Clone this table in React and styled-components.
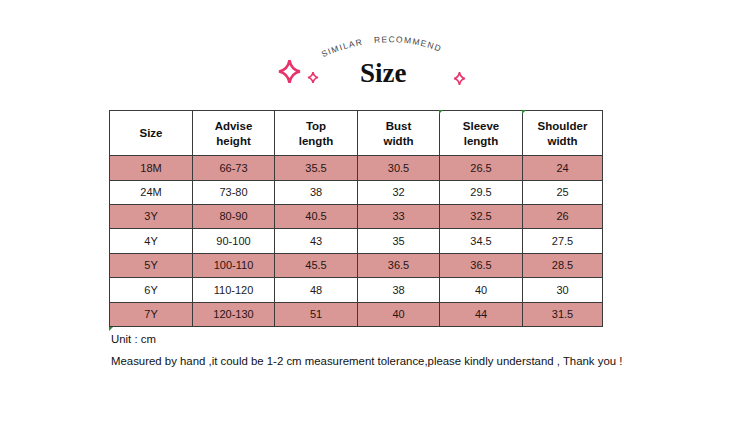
import React from "react";
import styled, { createGlobalStyle } from "styled-components";

const GlobalStyle = createGlobalStyle`
  html, body { margin: 0; padding: 0; background: #ffffff; }
  body { font-family: "Liberation Sans", Arial, sans-serif; }
`;

const Page = styled.div`
  width: 750px;
  height: 429px;
  background: #fff;
  display: flex;
  flex-direction: column;
  overflow: hidden;
`;

const Header = styled.div`
  display: flex;
  flex-direction: column;
  align-items: flex-start;
  padding: 34px 0 0 277px;
  height: 110px;
  flex: none;
  box-sizing: border-box;
`;

const ArcSvg = styled.svg`
  display: block;
  flex: none;
  margin-left: 41px;
  width: 132px;
  height: 26px;
`;

const TitleRow = styled.div`
  display: flex;
  flex: none;
  align-items: center;
  height: 28px;
  margin-top: -3px;
`;

const Sparkle = styled.svg`
  display: block;
  flex: none;
  margin-left: ${(p) => p.$ml || 0}px;
  margin-top: ${(p) => p.$mt || 0}px;
`;

const Title = styled.h1`
  margin: 0 0 0 ${(p) => p.$ml}px;
  font-family: "Liberation Serif", "Times New Roman", serif;
  font-weight: 700;
  font-size: 27px;
  line-height: 28px;
  color: #111;
  position: relative;
  top: 2px;
`;

const Table = styled.div`
  margin: 0 0 0 109px;
  display: grid;
  grid-template-columns: 82px 81px 82px 81px 82px 79px;
  grid-template-rows: 44px 24px 23px 23px 24px 23px 24px 23px;
  gap: 1px;
  padding: 1px;
  background: #3a3a3a;
  width: max-content;
  flex: none;
`;

const Row = styled.div`
  display: contents;
`;

const Cell = styled.div`
  position: relative;
  display: flex;
  align-items: center;
  justify-content: center;
  text-align: center;
  background: ${(p) => (p.$pink ? "#d99896" : "#ffffff")};
  color: ${(p) => (p.$pink ? "#2a1414" : "#1a1a1a")};
  font-size: 11px;
  line-height: 13px;
  &::before {
    content: "";
    display: ${(p) => (p.$mark ? "block" : "none")};
    position: absolute;
    left: -1px;
    top: -1px;
    border-top: 4px solid #2f8a2f;
    border-right: 4px solid transparent;
  }
`;

const HeadCell = styled(Cell)`
  font-weight: 700;
  font-size: 11.5px;
  line-height: 15px;
  color: #111;
  padding-top: 1px;
`;

const Notes = styled.div`
  position: relative;
  margin: 5px 0 0 111px;
  display: flex;
  flex-direction: column;
  gap: 8px;
  color: #111;
  font-size: 11.4px;
  line-height: 14px;
  &::before {
    content: "";
    position: absolute;
    left: -2px;
    top: -5px;
    border-top: 4px solid #2f8a2f;
    border-right: 4px solid transparent;
  }
`;

const Note = styled.p`
  margin: 0;
  white-space: nowrap;
`;

const PINK = "#e8336b";

function Star({ w, h, sw, ml, mt }) {
  const rx = 50;
  const ry = 50;
  return (
    <Sparkle $ml={ml} $mt={mt} width={w} height={h} viewBox="-60 -60 120 120" preserveAspectRatio="none">
      <path
        d={`M0,-${ry} Q8,-8 ${rx},0 Q8,8 0,${ry} Q-8,8 -${rx},0 Q-8,-8 0,-${ry} Z`}
        fill="none"
        stroke={PINK}
        strokeWidth={sw}
        strokeLinejoin="miter"
        vectorEffect="non-scaling-stroke"
      />
    </Sparkle>
  );
}

const headers = [
  ["Size"],
  ["Advise", "height"],
  ["Top", "length"],
  ["Bust", "width"],
  ["Sleeve", "length"],
  ["Shoulder", "width"],
];

const rows = [
  ["18M", "66-73", "35.5", "30.5", "26.5", "24"],
  ["24M", "73-80", "38", "32", "29.5", "25"],
  ["3Y", "80-90", "40.5", "33", "32.5", "26"],
  ["4Y", "90-100", "43", "35", "34.5", "27.5"],
  ["5Y", "100-110", "45.5", "36.5", "36.5", "28.5"],
  ["6Y", "110-120", "48", "38", "40", "30"],
  ["7Y", "120-130", "51", "40", "44", "31.5"],
];

export default function App() {
  return (
    <>
      <GlobalStyle />
      <Page>
        <Header>
          <ArcSvg viewBox="0 0 132 26">
            <defs>
              <path id="arc" d="M3,24 Q70,-6 130,21" fill="none" />
            </defs>
            <text
              fontFamily="'Liberation Sans', Arial, sans-serif"
              fontSize="8.5"
              fill="#444"
              textLength="120"
              lengthAdjust="spacing"
            >
              <textPath href="#arc" startOffset="2" textLength="120" lengthAdjust="spacing">
                SIMILAR{"\u00a0\u00a0\u00a0"}RECOMMEND
              </textPath>
            </text>
          </ArcSvg>
          <TitleRow>
            <Star w={25} h={27} sw={2.6} />
            <Star w={12} h={13} sw={1.6} ml={5} mt={12} />
            <Title $ml={41}>Size</Title>
            <Star w={13} h={15} sw={1.6} ml={46} mt={14} />
          </TitleRow>
        </Header>
        <Table>
          <Row>
            {headers.map((h, i) => (
              <HeadCell key={i} $mark={i === 4 || i === 5}>
                {h.map((line, j) => (
                  <React.Fragment key={j}>
                    {j > 0 && <br />}
                    {line}
                  </React.Fragment>
                ))}
              </HeadCell>
            ))}
          </Row>
          {rows.map((r, ri) => (
            <Row key={ri}>
              {r.map((v, ci) => (
                <Cell key={ci} $pink={ri % 2 === 0}>
                  {v}
                </Cell>
              ))}
            </Row>
          ))}
        </Table>
        <Notes>
          <Note>Unit : cm</Note>
          <Note>
            Measured by hand ,it could be 1-2 cm measurement tolerance,please kindly understand , Thank you !
          </Note>
        </Notes>
      </Page>
    </>
  );
}
